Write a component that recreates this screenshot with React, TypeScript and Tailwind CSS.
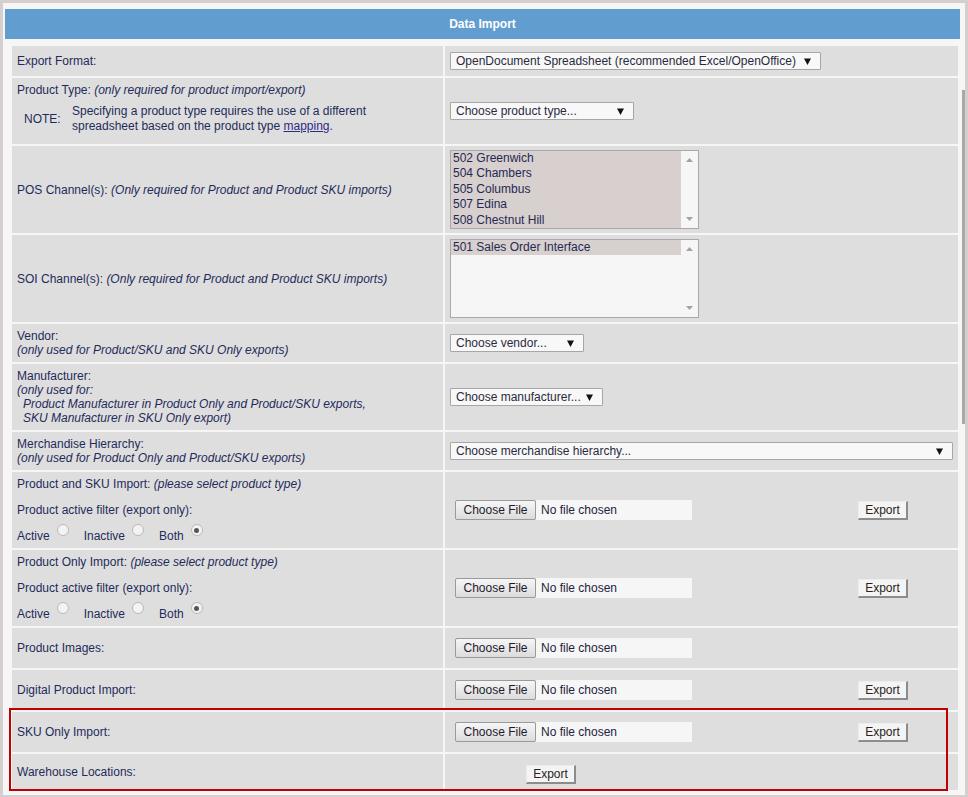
import React from 'react'

const label = 'text-[#1f2b5b]'

function Arrow() {
  return (
    <svg width="7" height="7" viewBox="0 0 7 7" className="shrink-0">
      <polygon points="0,0.5 7,0.5 3.5,7" fill="#111" />
    </svg>
  )
}

function Select({ text, width }: { text: string; width: string }) {
  return (
    <div
      className={`${width} flex h-[18px] items-center justify-between rounded-[1px] border border-[#a6a6a6] bg-[#f8f8f8] pl-[5px] pr-[9px] text-[#2a2a3f]`}
    >
      <span className="truncate">{text}</span>
      <Arrow />
    </div>
  )
}

function ListBox({ items, fill }: { items: string[]; fill: boolean }) {
  return (
    <div className="flex h-[79px] w-[249px] border border-[#a9a9a9] bg-[#f6f6f6]">
      <div className={`flex-1 ${fill ? 'bg-[#d8cfcf]' : ''}`}>
        {items.map((it) => (
          <div key={it} className="h-[15.4px] bg-[#d8cfcf] pl-[2px] leading-[15px] text-[#232a52]">
            {it}
          </div>
        ))}
      </div>
      <div className="flex w-[17px] flex-col items-center justify-between py-[7px]">
        <svg width="7" height="4" viewBox="0 0 7 4">
          <polygon points="0,4 7,4 3.5,0" fill="#a3a3a3" />
        </svg>
        <svg width="7" height="4" viewBox="0 0 7 4">
          <polygon points="0,0 7,0 3.5,4" fill="#a3a3a3" />
        </svg>
      </div>
    </div>
  )
}

function FileInput() {
  return (
    <div className="flex h-[20px] items-stretch">
      <div className="flex w-[81px] items-center justify-center rounded-[2px] border border-[#9a9a9a] bg-gradient-to-b from-[#f6f6f6] to-[#dcdcdc] text-[#1c1c2c]">
        Choose File
      </div>
      <div className="flex w-[156px] items-center bg-[#f6f6f6] pl-[5px] text-[#23233a]">No file chosen</div>
    </div>
  )
}

function ExportButton({ className = '' }: { className?: string }) {
  return (
    <div
      className={`flex h-[19px] w-[50px] items-center justify-center border-t border-l border-r-2 border-b-2 border-t-[#ececec] border-l-[#ececec] border-r-[#8c8c8c] border-b-[#8c8c8c] bg-[#f4f4f4] text-[#2a2222] ${className}`}
    >
      Export
    </div>
  )
}

function Radio({ checked }: { checked?: boolean }) {
  return (
    <span className="relative -top-[7px] ml-[7px] mr-[4px] inline-flex h-[12px] w-[12px] items-center justify-center rounded-full border border-[#b9b9b9] bg-[#f3f3f3] align-middle">
      {checked && <span className="h-[5px] w-[5px] rounded-full bg-[#555]" />}
    </span>
  )
}

function Row({ h, left, right, leftClass = '' }: { h: string; left: React.ReactNode; right: React.ReactNode; leftClass?: string }) {
  return (
    <div className={`flex gap-[2px] ${h}`}>
      <div className={`flex w-[431px] flex-col justify-center bg-[#dedede] pl-[5px] ${label} ${leftClass}`}>{left}</div>
      <div className="flex flex-1 items-center bg-[#dedede] pl-[5px]">{right}</div>
    </div>
  )
}

function FilterBlock({ title }: { title: string }) {
  return (
    <div className="flex flex-col leading-[14px]">
      <div>
        {title}: <i>(please select product type)</i>
      </div>
      <div className="mt-[12px]">Product active filter (export only):</div>
      <div className="mt-[12px] flex items-end">
        <span>Active</span>
        <Radio />
        <span className="ml-[11px]">Inactive</span>
        <Radio />
        <span className="ml-[11px]">Both</span>
        <Radio checked />
      </div>
    </div>
  )
}

function FileRow({ exportBtn = true }: { exportBtn?: boolean }) {
  return (
    <div className="flex items-center pl-[5px]">
      <FileInput />
      {exportBtn && <ExportButton className="ml-[166px]" />}
    </div>
  )
}

export default function App() {
  return (
    <div className="h-[797px] w-[968px] overflow-hidden bg-[#d6cfcf] pl-[3px] pt-[3px] font-['Liberation_Sans',Arial,sans-serif] text-[12px] leading-[14px]">
      <div className="relative h-[792px] w-[962px] bg-[#f6f6f6] pt-[6px]">
        <div className="ml-[2px] flex h-[30px] w-[955px] items-center justify-center bg-[#629dd0] font-bold text-white">
          Data Import
        </div>

        <div className="ml-[9px] mt-[7px] flex w-[946px] flex-col gap-[2px]">
          <Row
            h="h-[30px]"
            left={<div>Export Format:</div>}
            right={<Select text="OpenDocument Spreadsheet (recommended Excel/OpenOffice)" width="w-[371px]" />}
          />
          <Row
            h="h-[66px]"
            leftClass="!justify-start pt-[5px]"
            left={
              <>
                <div>
                  Product Type: <i>(only required for product import/export)</i>
                </div>
                <div className="mt-[7px] flex items-center">
                  <div className="w-[55px] pl-[7px]">NOTE:</div>
                  <div className="leading-[15px]">
                    Specifying a product type requires the use of a different
                    <br />
                    spreadsheet based on the product type{' '}
                    <span className="text-[#2f2a85] underline">mapping</span>.
                  </div>
                </div>
              </>
            }
            right={<Select text="Choose product type..." width="w-[184px]" />}
          />
          <Row
            h="h-[87px]"
            left={
              <div>
                POS Channel(s): <i>(Only required for Product and Product SKU imports)</i>
              </div>
            }
            right={
              <ListBox
                fill
                items={['502 Greenwich', '504 Chambers', '505 Columbus', '507 Edina', '508 Chestnut Hill']}
              />
            }
          />
          <Row
            h="h-[87px]"
            left={
              <div>
                SOI Channel(s): <i>(Only required for Product and Product SKU imports)</i>
              </div>
            }
            right={<ListBox fill={false} items={['501 Sales Order Interface']} />}
          />
          <Row
            h="h-[38px]"
            left={
              <>
                <div>Vendor:</div>
                <i>(only used for Product/SKU and SKU Only exports)</i>
              </>
            }
            right={<Select text="Choose vendor..." width="w-[134px]" />}
          />
          <Row
            h="h-[66px]"
            left={
              <>
                <div>Manufacturer:</div>
                <i>(only used for:</i>
                <i className="pl-[6px]">Product Manufacturer in Product Only and Product/SKU exports,</i>
                <i className="pl-[6px]">SKU Manufacturer in SKU Only export)</i>
              </>
            }
            right={<Select text="Choose manufacturer..." width="w-[153px]" />}
          />
          <Row
            h="h-[38px]"
            left={
              <>
                <div>Merchandise Hierarchy:</div>
                <i>(only used for Product Only and Product/SKU exports)</i>
              </>
            }
            right={<Select text="Choose merchandise hierarchy..." width="w-[503px]" />}
          />
          <Row h="h-[76px]" left={<FilterBlock title="Product and SKU Import" />} right={<FileRow />} />
          <Row h="h-[76px]" left={<FilterBlock title="Product Only Import" />} right={<FileRow />} />
          <Row h="h-[40px]" left={<div>Product Images:</div>} right={<FileRow exportBtn={false} />} />
          <Row h="h-[40px]" left={<div>Digital Product Import:</div>} right={<FileRow />} />
          <Row h="h-[40px]" left={<div>SKU Only Import:</div>} right={<FileRow />} />
          <Row h="h-[36px]" left={<div>Warehouse Locations:</div>} right={<ExportButton className="ml-[76px] mt-[4px]" />} />
        </div>

        {/* annotation box */}
        <div className="pointer-events-none absolute left-[6px] top-[705px] h-[83px] w-[939px] border-2 border-[#c00000]" />
        {/* page scrollbar thumb */}
        <div className="absolute left-[959px] top-[87px] h-[334px] w-[3px] bg-[#a8aaa8]" />
      </div>
    </div>
  )
}
